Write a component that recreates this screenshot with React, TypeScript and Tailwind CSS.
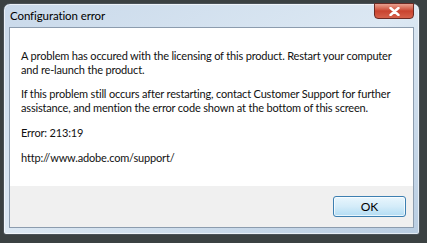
export default function App() {
  return (
    <div
      className="w-[427px] h-[243px] overflow-hidden bg-[#3b4142] pt-[3px] pl-[3px]"
      style={{ fontFamily: 'Lato, "Noto Sans", sans-serif' }}
    >
      {/* Window frame */}
      <div className="w-[417px] h-[232px] rounded-t-[7px] rounded-b-[3px] border border-[#4a5258] bg-gradient-to-br from-[#c9d9ea] via-[#dce8f3] to-[#b9cde2] flex flex-col px-[5px] pb-[6px] shadow-[inset_0_0_0_1px_rgba(255,255,255,0.6)]">
        {/* Title bar */}
        <div className="h-[23px] flex items-start justify-between shrink-0">
          <span className="text-[11.5px] leading-[14px] tracking-[-0.1px] text-black mt-[5px] pl-[1px]">
            Configuration error
          </span>
          <div className="w-[40px] h-[16px] -mt-px rounded-b-[4px] border border-[#6b2a24] bg-gradient-to-b from-[#e8a08f] via-[#c9432f] to-[#d5604a] flex items-center justify-center">
            <svg width="11" height="9" viewBox="0 0 11 9">
              <path
                d="M1.5 1 L9.5 8 M9.5 1 L1.5 8"
                stroke="#ffffff"
                strokeWidth="2.4"
                strokeLinecap="round"
              />
            </svg>
          </div>
        </div>

        {/* Client area */}
        <div className="flex-1 flex flex-col border border-[#8c9cae] bg-white">
          <div className="flex-1 pl-[11px] pr-[4px] pt-[21px] text-[11px] leading-[14px] tracking-[-0.17px] text-[#111] whitespace-nowrap">
            <p>
              A problem has occured with the licensing of this product. Restart your computer
              <br />
              and re-launch the product.
            </p>
            <p className="mt-[10px]">
              If this problem still occurs after restarting, contact Customer Support for further
              <br />
              assistance, and mention the error code shown at the bottom of this screen.
            </p>
            <p className="mt-[11px]">Error: 213:19</p>
            <p className="mt-[11px]">http://www.adobe.com/support/</p>
          </div>
          <div className="h-[41px] bg-[#f0f0f0] flex items-center justify-end pr-[7px] shrink-0">
            <button className="w-[73px] h-[21px] rounded-[3px] border border-[#3c7fb1] bg-gradient-to-b from-[#e9f6fd] via-[#d4ecf9] to-[#b2dcf3] text-[12px] leading-none text-black shadow-[inset_0_0_0_1px_rgba(255,255,255,0.7)]">
              OK
            </button>
          </div>
        </div>
      </div>
    </div>
  );
}
